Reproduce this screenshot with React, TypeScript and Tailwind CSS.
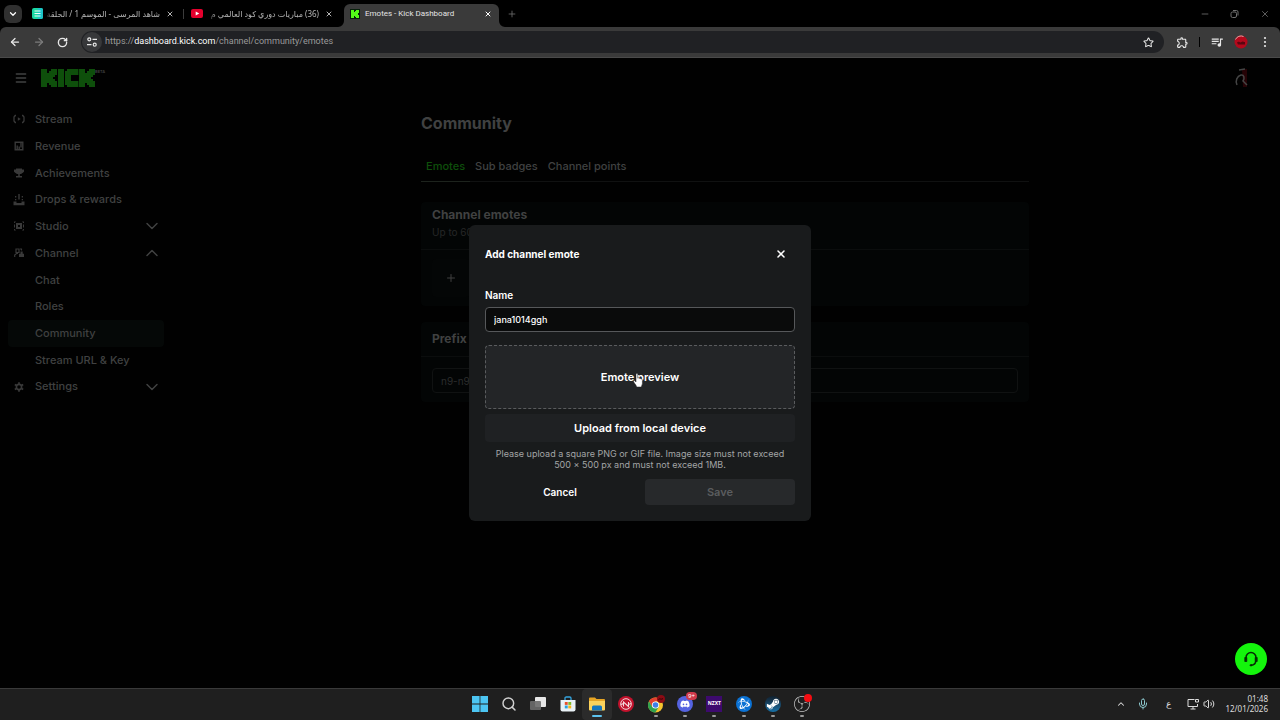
import type { ReactNode } from "react";
import {
  ArrowLeft,
  ArrowRight,
  ChevronDown,
  ChevronUp,
  Menu,
  Mic,
  Minus,
  Plus,
  RotateCw,
  Search,
  Star,
  Volume2,
  X,
} from "lucide-react";
import { FaDiscord, FaSteamSymbol } from "react-icons/fa";
import { SiBattledotnet, SiObsstudio } from "react-icons/si";
import { MdOutlineExtension, MdQueueMusic } from "react-icons/md";

type NavItem = {
  label: string;
  icon?: ReactNode;
  active?: boolean;
  toggle?: "open" | "closed";
};

const navItems: NavItem[] = [
  { label: "Stream", icon: <StreamIcon /> },
  { label: "Revenue", icon: <RevenueIcon /> },
  { label: "Achievements", icon: <TrophyIcon /> },
  { label: "Drops & rewards", icon: <DropsIcon /> },
  { label: "Studio", icon: <StudioIcon />, toggle: "closed" },
  { label: "Channel", icon: <ChannelIcon />, toggle: "open" },
  { label: "Chat" },
  { label: "Roles" },
  { label: "Community", active: true },
  { label: "Stream URL & Key" },
  { label: "Settings", icon: <GearIcon />, toggle: "closed" },
];

function StreamIcon() {
  return (
    <svg viewBox="0 0 12 12" className="size-3" fill="none" stroke="currentColor" strokeWidth="1.3">
      <path d="M3 2.5H2.2L1 4v4l1.2 1.5H3M9 2.5h.8L11 4v4L9.800 9.500H9" />
      <path d="M4.800 4.200v3.600L7.800 6z" fill="currentColor" stroke="none" />
    </svg>
  );
}

function RevenueIcon() {
  return (
    <svg viewBox="0 0 12 12" className="size-3" fill="none" stroke="currentColor" strokeWidth="1.4">
      <path d="M2.200 2.200h7.600v7.600H2.200z" />
      <path d="M4.200 5.500v4M6.200 6.500v3M8 2.500v5" />
    </svg>
  );
}

function TrophyIcon() {
  return (
    <svg viewBox="0 0 12 12" className="size-3" fill="currentColor">
      <path d="M3 1.500h6v1h2v2.200L9.500 6 8 7H6.800v2H9v1.500H3V9h2.200V7H4L2.500 6 1 4.700V2.500h2z" />
    </svg>
  );
}

function DropsIcon() {
  return (
    <svg viewBox="0 0 12 12" className="size-3" fill="currentColor">
      <path d="M5.300 0h1.400v5.500H5.300zM2 2h1.300v1.400H2zM8.700 2H10v1.400H8.700zM2 5h1.300v1.300H2zM8.700 5H10v1.300H8.700zM.5 7.500h3V9h5V7.500h3V11.300H.5z" />
    </svg>
  );
}

function StudioIcon() {
  return (
    <svg viewBox="0 0 12 12" className="size-3" fill="currentColor">
      <path d="M3 3h6v6H3zm2 2v2h2V5z" fillRule="evenodd" />
      <path d="M1 1.500h2L1.800 3H1zM9 1.500h2V3h-.8zM1 9h.8L3 10.500H1zM10.200 9h.8v1.500H9zM1 4.500h1v3H1zM10 4.500h1v3h-1z" />
    </svg>
  );
}

function ChannelIcon() {
  return (
    <svg viewBox="0 0 12 12" className="size-3" fill="none" stroke="currentColor" strokeWidth="1.200">
      <path d="M3 2h3v3.500H3zM1.700 10V8l1.800-1.500H5" />
      <path d="M7.500 4.500h2.200v2.300H11V10H6V6.800h1.500z" fill="currentColor" stroke="none" />
      <path d="M7 2h1.500v1.500" />
    </svg>
  );
}

function GearIcon() {
  return (
    <svg viewBox="0 0 12 12" className="size-3" fill="none" stroke="currentColor">
      <circle cx="6" cy="6" r="2.600" strokeWidth="1.600" />
      <path
        d="M6 1.200v1.800M6 9v1.800M1.800 3.600l1.600.9M8.600 7.500l1.600.9M1.800 8.400l1.600-.9M8.600 4.500l1.600-.9"
        strokeWidth="1.700"
      />
    </svg>
  );
}

function KickLogo() {
  return (
    <svg viewBox="0 0 27 9" className="h-[18px] w-[54px]" fill="#0e4f0b" aria-label="Kick">
      <path d="M0 0h3v2h1V1h1V0h3v3H7v1H6v1h1v1h1v3H5V8H4V7H3v2H0z" />
      <path d="M8.500 0h3v9h-3z" />
      <path d="M13 0h5.700v3H15v3h3.700v3H13V8h-1V1h1z" />
      <path d="M19 0h3v2h1V1h1V0h3v3h-1v1h-1v1h1v1h1v3h-3V8h-1V7h-1v2h-3z" />
    </svg>
  );
}

function BrowserTabs() {
  return (
    <div className="flex h-[27px] items-end bg-black text-[#b4b4b4]">
      <button
        type="button"
        aria-label="Search tabs"
        className="mb-1 ml-1 flex size-[18px] items-center justify-center rounded-md bg-[#303030] text-white"
      >
        <ChevronDown className="size-2.5" strokeWidth={3} />
      </button>

      <div className="flex h-[27px] w-[161px] items-center pl-[10px]">
        <svg viewBox="0 0 11 11" className="size-[11px] shrink-0">
          <rect width="11" height="11" rx="2" fill="#19d8a4" />
          <path d="M6 0h3a2 2 0 0 1 2 2v7a2 2 0 0 1-2 2H6z" fill="#1cc4c8" />
          <path d="M2.500 3h6M2.500 5.500h6M2.500 8h6" stroke="#eafff8" strokeWidth="1.200" />
        </svg>
        <span
          dir="rtl"
          className="ml-0.5 w-[115px] mask-[linear-gradient(to_right,transparent,black_8px)] text-[8px] leading-3 whitespace-nowrap"
        >
          شاهد المرسى - الموسم 1 / الحلقة
        </span>
        <button type="button" aria-label="Close tab" className="ml-1.5">
          <X className="size-2" strokeWidth={3} />
        </button>
      </div>

      <div className="flex h-[27px] w-[161px] items-center">
        <span className="h-2.5 w-px bg-[#3c3c3c]" />
        <svg viewBox="0 0 12 9" className="ml-[7px] h-[9px] w-3 shrink-0">
          <rect width="12" height="9" rx="2" fill="#e5002d" />
          <path d="M4.700 2.400v4.200L8.300 4.500z" fill="#fff" />
        </svg>
        <span
          dir="rtl"
          className="ml-[5px] w-[111px] mask-[linear-gradient(to_right,transparent,black_8px)] text-[8px] leading-3 whitespace-nowrap"
        >
          (36) مباريات دوري كود العالمي م
        </span>
        <button type="button" aria-label="Close tab" className="ml-1.5">
          <X className="size-2" strokeWidth={3} />
        </button>
      </div>

      <div className="relative flex h-[23px] w-[155px] items-center rounded-t-md bg-[#3a3a3a] pr-[7px] pb-[3px] pl-1.5 text-[#e4e4e4]">
        <svg viewBox="0 0 6 6" className="absolute bottom-0 -left-1.5 size-1.5">
          <path d="M6 0v6H0a6 6 0 0 0 6-6z" fill="#3a3a3a" />
        </svg>
        <svg viewBox="0 0 6 6" className="absolute -right-1.5 bottom-0 size-1.5">
          <path d="M0 0v6h6a6 6 0 0 1-6-6z" fill="#3a3a3a" />
        </svg>
        <svg viewBox="0 0 10 10" className="size-[10px] shrink-0">
          <rect width="10" height="10" fill="#06200a" />
          <path d="M1 1h3v2h1V2h1V1h3v3H8v1H7v0h1v1h1v3H6V8H5V7H4v2H1z" fill="#53fc18" />
        </svg>
        <span className="ml-[5px] flex-1 font-[Roboto,sans-serif] text-[8px] leading-3 whitespace-nowrap">
          Emotes - Kick Dashboard
        </span>
        <button type="button" aria-label="Close tab" className="text-white">
          <X className="size-2" strokeWidth={3} />
        </button>
      </div>

      <button type="button" aria-label="New tab" className="mb-2 ml-2 text-[#6d6d6d]">
        <Plus className="size-2.5" strokeWidth={2} />
      </button>

      <div className="mb-2 ml-auto flex items-center gap-5 pr-2.5 text-[#6f6f6f]">
        <button type="button" aria-label="Minimize">
          <Minus className="size-2.5" strokeWidth={2} />
        </button>
        <button type="button" aria-label="Restore">
          <svg viewBox="0 0 10 10" className="size-2.5" fill="none" stroke="currentColor">
            <rect x="1" y="3" width="5.500" height="5.500" rx="1.500" />
            <path d="M3 1.500h3.500a1.500 1.500 0 0 1 1.500 1.500v3.500" />
          </svg>
        </button>
        <button type="button" aria-label="Close window">
          <X className="size-2.5" strokeWidth={2} />
        </button>
      </div>
    </div>
  );
}

function BrowserToolbar() {
  return (
    <div className="bg-black">
      <div className="flex h-[31px] items-center rounded-t-md border-b border-[#4a4a4a] bg-[#3a3a3a] text-[#e8e8e8]">
        <div className="flex w-[81px] shrink-0 items-center gap-3 pl-[9px]">
          <button type="button" aria-label="Back">
            <ArrowLeft className="size-3" strokeWidth={2.5} />
          </button>
          <button type="button" aria-label="Forward" className="text-[#7c7c7c]">
            <ArrowRight className="size-3" strokeWidth={2.5} />
          </button>
          <button type="button" aria-label="Reload">
            <RotateCw className="size-[11px]" strokeWidth={3} />
          </button>
        </div>
        <div className="flex h-[22px] flex-1 items-center rounded-full bg-[#202124] pr-2.5 pl-px">
          <button
            type="button"
            aria-label="Site information"
            className="flex size-5 shrink-0 items-center justify-center rounded-full bg-[#37383a]"
          >
            <svg viewBox="0 0 12 12" className="size-3" fill="none" stroke="currentColor" strokeWidth="1.200">
              <circle cx="3.300" cy="3.300" r="1.500" />
              <circle cx="8.700" cy="8.700" r="1.500" />
              <path d="M6.500 3.300h4.500M1 8.700h4.500" />
            </svg>
          </button>
          <span className="ml-[3px] font-[Roboto,sans-serif] text-[9px] whitespace-nowrap text-[#9a9a9a]">
            https://<span className="text-white">dashboard.kick.com</span>/channel/community/emotes
          </span>
          <button type="button" aria-label="Bookmark" className="ml-auto">
            <Star className="size-[11px]" strokeWidth={2.200} />
          </button>
        </div>
        <div className="flex shrink-0 items-center gap-2.5 pr-2.5 pl-3">
          <button type="button" aria-label="Extensions">
            <MdOutlineExtension className="size-[13px]" />
          </button>
          <span className="h-2.5 w-px bg-black" />
          <button type="button" aria-label="Media">
            <MdQueueMusic className="size-[14px]" />
          </button>
          <button type="button" aria-label="Profile">
            <svg viewBox="0 0 14 14" className="size-[14px]">
              <circle cx="7" cy="7" r="6.500" fill="#b3091c" />
              <path d="M1.500 4.500a6 6 0 0 1 8-3" stroke="#e7a4a4" fill="none" />
              <path d="M3 7.500c2-2 3 1 4.500-.5s2 .5 3.500 0v2.500H4z" fill="#5a0610" />
            </svg>
          </button>
          <button type="button" aria-label="Browser menu" className="pl-0.5">
            <svg viewBox="0 0 10 12" className="h-3 w-2.5" fill="currentColor">
              <circle cx="5" cy="2" r="1.100" />
              <circle cx="5" cy="6" r="1.100" />
              <circle cx="5" cy="10" r="1.100" />
            </svg>
          </button>
        </div>
      </div>
    </div>
  );
}

function Sidebar() {
  return (
    <nav className="w-[170px] shrink-0 pt-2 pr-1.5 pl-2">
      <ul className="flex h-[294px] flex-col">
        {navItems.map((item) => (
          <li key={item.label} className="flex-1">
            <a
              href="#"
              className={`flex h-full items-center rounded pr-0.5 pl-[5px] text-[11px] font-medium ${
                item.active ? "bg-[#050807]" : ""
              }`}
            >
              <span className="w-[22px] shrink-0 text-[#393939]">{item.icon}</span>
              <span className="flex-1">{item.label}</span>
              {item.toggle === "closed" && <ChevronDown className="size-5" strokeWidth={1.800} />}
              {item.toggle === "open" && <ChevronUp className="size-5" strokeWidth={1.800} />}
            </a>
          </li>
        ))}
      </ul>
    </nav>
  );
}

function CommunityPage() {
  return (
    <main className="min-w-0 flex-1 pt-[13px]">
      <div className="mx-auto max-w-[608px]">
        <h1 className="text-base leading-6 font-bold">Community</h1>

        <div className="mt-[23px] flex border-b border-[#101111] text-[11px] leading-4 font-medium">
          <a href="#" className="-mb-px border-b border-[#1d231d] px-[5px] pb-[7px] text-[#0e4f0b]">
            Emotes
          </a>
          <a href="#" className="px-[5px] pb-[7px]">
            Sub badges
          </a>
          <a href="#" className="px-[5px] pb-[7px]">
            Channel points
          </a>
        </div>

        <section className="mt-5 rounded bg-[#030505]">
          <div className="border-b border-[#0b0d0d] px-[11px] pt-1 pb-[9px]">
            <h2 className="text-xs leading-[18px] font-bold">Channel emotes</h2>
            <p className="text-[10px] leading-4 text-[#262727]">Up to 60 emotes</p>
          </div>
          <div className="px-[11px] py-[9px]">
            <button
              type="button"
              aria-label="Add emote"
              className="flex size-[38px] items-center justify-center rounded bg-[#040606]"
            >
              <Plus className="size-3" strokeWidth={2} />
            </button>
          </div>
        </section>

        <section className="mt-4 rounded bg-[#030505]">
          <div className="border-b border-[#0b0d0d] px-[11px] py-2">
            <h2 className="text-xs leading-[18px] font-bold">
              <label htmlFor="prefix">Prefix</label>
            </h2>
          </div>
          <div className="px-[11px] pt-[11px] pb-[9px]">
            <input
              id="prefix"
              defaultValue="n9-n9"
              className="block h-[25px] w-full rounded-sm border border-[#101212] bg-transparent px-2 text-[10px] text-[#2c2d2d] outline-none"
            />
          </div>
        </section>
      </div>
    </main>
  );
}

function HandCursor() {
  return (
    <svg viewBox="0 0 10 15" className="absolute top-[27px] left-[147px] h-[15px] w-2.5">
      <path
        d="M3 1.500c0-1.300 1.800-1.300 1.800 0v3.700c.5-.6 1.400-.4 1.600.3.500-.4 1.300-.1 1.500.5.700-.2 1.500.2 1.500 1.100v3.300c0 1.400-1 2-1 3.600H3.600c0-1.500-1.500-2.600-2.900-5-.6-1.100.5-1.900 1.300-1.100l1 1z"
        fill="#fff"
        stroke="#222"
        strokeWidth=".5"
      />
    </svg>
  );
}

function AddEmoteDialog() {
  return (
    <div className="absolute inset-0 flex items-center justify-center">
      <div
        role="dialog"
        aria-labelledby="dialog-title"
        className="w-[342px] rounded-md bg-[#191b1c] px-4 pt-5 pb-4 text-white"
      >
        <div className="flex h-[18px] items-center justify-between">
          <h2 id="dialog-title" className="text-[10px] font-bold">
            Add channel emote
          </h2>
          <button type="button" aria-label="Close" className="pr-2">
            <X className="size-3" strokeWidth={3} />
          </button>
        </div>

        <label htmlFor="emote-name" className="mt-6 block text-[10px] leading-4 font-semibold">
          Name
        </label>
        <input
          id="emote-name"
          defaultValue="jana1014ggh"
          className="mt-1 block h-[25px] w-full rounded-sm border border-[#56585a] bg-[#0a0b0b] px-2 text-[9px] font-medium outline-none"
        />

        <div className="relative mt-[13px] flex h-16 items-center justify-center rounded-sm border border-dashed border-[#5a5c5e] bg-[#232527] text-[11px] font-semibold">
          Emote preview
          <HandCursor />
        </div>

        <button
          type="button"
          className="mt-[5px] block h-7 w-full rounded-sm bg-[#1f2123] text-[11px] font-semibold"
        >
          Upload from local device
        </button>
        <p className="mt-1.5 px-2 text-center text-[9px] leading-[11px] text-[#a3a5a6]">
          Please upload a square PNG or GIF file. Image size must not exceed 500 × 500 px and must
          not exceed 1MB.
        </p>

        <div className="mt-[9px] grid h-[26px] grid-cols-2 gap-2.5">
          <button type="button" className="text-[10px] font-semibold">
            Cancel
          </button>
          <button
            type="button"
            disabled
            className="rounded-sm bg-[#27292b] text-[11px] font-semibold text-[#5b5d5f]"
          >
            Save
          </button>
        </div>
      </div>
    </div>
  );
}

const taskbarApps: { name: string; icon: ReactNode; running?: boolean; focused?: boolean }[] = [
  {
    name: "Start",
    icon: (
      <svg viewBox="0 0 16 16" className="size-4" fill="#4cc5f2">
        <path d="M0 0h7.600v7.600H0zM8.400 0H16v7.600H8.400zM0 8.400h7.600V16H0zM8.400 8.400H16V16H8.400z" />
      </svg>
    ),
  },
  { name: "Search", icon: <Search className="size-4 text-[#d0d0d0]" strokeWidth={2.200} /> },
  {
    name: "Task view",
    icon: (
      <svg viewBox="0 0 16 16" className="size-4">
        <rect x="5" y="1" width="11" height="10" rx="1" fill="#e6e6e6" />
        <rect x="0" y="5" width="11" height="9" rx="1" fill="#6b6b6b" fillOpacity=".9" />
      </svg>
    ),
  },
  {
    name: "Microsoft Store",
    icon: (
      <svg viewBox="0 0 16 16" className="size-4">
        <path d="M5 4V2.200C5 1.300 5.600 1 6.300 1h3.400c.7 0 1.300.3 1.300 1.200V4" fill="none" stroke="#35a5e0" strokeWidth="1.300" />
        <path d="M.5 4h15v9.500a2 2 0 0 1-2 2h-11a2 2 0 0 1-2-2z" fill="#e9f1f6" />
        <path d="M4.800 6h2.900v2.900H4.800z" fill="#e8502c" />
        <path d="M8.300 6h2.900v2.900H8.300z" fill="#7fb92a" />
        <path d="M4.800 9.500h2.900v2.900H4.800z" fill="#2aa2e0" />
        <path d="M8.300 9.500h2.900v2.900H8.300z" fill="#f6b61a" />
      </svg>
    ),
  },
  {
    name: "File Explorer",
    focused: true,
    icon: (
      <svg viewBox="0 0 16 16" className="size-4">
        <path d="M0 2.500a1 1 0 0 1 1-1h5L7.500 3H15a1 1 0 0 1 1 1v4H0z" fill="#e7a525" />
        <path d="M0 5h16v8.500a1 1 0 0 1-1 1H1a1 1 0 0 1-1-1z" fill="#fbd25c" />
        <path d="M3 14.500V11a1.500 1.500 0 0 1 1.500-1.500h7A1.500 1.500 0 0 1 13 11v3.500z" fill="#1676bd" />
      </svg>
    ),
  },
  {
    name: "Launcher",
    icon: (
      <svg viewBox="0 0 16 16" className="size-4">
        <circle cx="8" cy="8" r="8" fill="#c2122c" />
        <circle cx="8" cy="8" r="5.300" fill="none" stroke="#f3d8dc" strokeWidth="1" />
        <path d="M5.500 10.500V6l5 4.500V6M3 8.500l2.500-1M10.500 8.500l2.500-1" fill="none" stroke="#f3d8dc" strokeWidth="1.100" />
      </svg>
    ),
  },
  {
    name: "Chrome",
    running: true,
    icon: (
      <svg viewBox="0 0 18 18" className="size-[18px]">
        <circle cx="8.500" cy="10" r="7.500" fill="#f7c52e" />
        <path d="M2 6.200A7.500 7.500 0 0 1 15 6.200H8.500L5.200 12z" fill="#e2402f" />
        <path d="M2 6.200A7.500 7.500 0 0 0 8.300 17.500L11.700 12H5.200z" fill="#2fa24f" />
        <circle cx="8.500" cy="10" r="3.600" fill="#fff" />
        <circle cx="8.500" cy="10" r="2.800" fill="#3f7fe8" />
        <circle cx="14" cy="4" r="4" fill="#8b0b14" />
        <path d="M11.500 4.500c1.500-1.500 2 .5 4.500-.8" stroke="#2f0306" fill="none" />
      </svg>
    ),
  },
  {
    name: "Discord",
    running: true,
    icon: (
      <span className="relative flex size-4 items-center justify-center rounded-full bg-[#5563e0] text-white">
        <FaDiscord className="size-2.5" />
        <span className="absolute -top-1 -right-1 rounded-full bg-[#cf3a4b] px-0.5 text-[6px] leading-2">
          9+
        </span>
      </span>
    ),
  },
  {
    name: "NZXT",
    running: true,
    icon: (
      <span className="flex size-4 items-center justify-center bg-[#3d0a6e] text-[5px] font-bold text-white">
        NZXT
      </span>
    ),
  },
  {
    name: "Battle.net",
    running: true,
    icon: (
      <span className="flex size-4 items-center justify-center rounded-full bg-[#0b72d4] text-white">
        <SiBattledotnet className="size-3" />
      </span>
    ),
  },
  {
    name: "Steam",
    running: true,
    icon: (
      <span className="flex size-4 items-center justify-center rounded-full bg-linear-to-b from-[#10202e] to-[#1672a8] text-white">
        <FaSteamSymbol className="size-3.5" />
      </span>
    ),
  },
  {
    name: "OBS Studio",
    running: true,
    icon: (
      <span className="relative flex size-4 text-[#c4c4c4]">
        <SiObsstudio className="size-4" />
        <span className="absolute -top-0.5 -right-0.5 size-2 rounded-full bg-[#f40d12]" />
      </span>
    ),
  },
];

function Taskbar() {
  return (
    <footer className="grid h-8 shrink-0 grid-cols-[1fr_354px_1fr] border-t border-[#3a3a3a] bg-[#1f1f1f]">
      <span />
      <div className="grid grid-cols-12 pl-0.5">
        {taskbarApps.map((app) => (
          <button
            key={app.name}
            type="button"
            aria-label={app.name}
            className={`relative flex items-center justify-center pb-0.5 ${
              app.focused ? "rounded-sm bg-[#2b2b2b]" : ""
            }`}
          >
            {app.icon}
            {app.running && (
              <span className="absolute bottom-[3px] h-0.5 w-1 rounded-full bg-[#9a9a9a]" />
            )}
            {app.focused && (
              <span className="absolute bottom-[3px] h-0.5 w-2.5 rounded-full bg-[#5cc3ee]" />
            )}
          </button>
        ))}
      </div>
      <div className="flex items-center justify-end pr-3 pb-0.5 text-[#dcdcdc]">
        <ChevronUp className="size-2.5" strokeWidth={2.500} />
        <Mic className="ml-[11px] size-3 text-[#8cc7cd]" strokeWidth={2} />
        <span className="ml-[17px] text-[9px]">ع</span>
        <svg viewBox="0 0 12 12" className="ml-4 size-3" fill="none" stroke="currentColor">
          <path d="M7.500 1.500H1v7h9.500V6M3.500 11h5M6 8.500V11" />
          <path d="M8.500 1.500h3v2.500h-3z" />
        </svg>
        <Volume2 className="ml-1 size-3" strokeWidth={2} />
        <div className="ml-2.5 text-right text-[8px] leading-[10px]">
          <p>01:48</p>
          <p>12/01/2026</p>
        </div>
      </div>
    </footer>
  );
}

export default function App() {
  return (
    <div className="flex h-screen flex-col overflow-hidden bg-black font-['Noto_Sans','DejaVu_Sans',sans-serif]">
      <BrowserTabs />
      <BrowserToolbar />

      <div className="relative min-h-0 flex-1 bg-[#010101] font-[Inter,sans-serif] text-[#404141]">
        <header className="flex h-10 items-center pr-8 pl-[14px]">
          <button type="button" aria-label="Menu">
            <Menu className="size-3.5" strokeWidth={2.500} />
          </button>
          <a href="#" className="ml-[13px] flex items-start">
            <KickLogo />
            <span className="text-[4px] leading-[5px] font-semibold">BETA</span>
          </a>
          <button type="button" aria-label="Account" className="ml-auto">
            <svg viewBox="0 0 14 20" className="h-5 w-3.5" fill="none">
              <path d="M8 1h5v18H9z" fill="#260306" />
              <path d="M3 17c-2-4 0-9 4-10 3-.5 4 3 2 6l4 4M5 2l6-1" stroke="#454545" strokeWidth="1.500" />
            </svg>
          </button>
        </header>
        <div className="flex">
          <Sidebar />
          <CommunityPage />
        </div>

        <AddEmoteDialog />

        <button
          type="button"
          aria-label="Support"
          className="absolute right-[13px] bottom-[13px] flex size-8 items-center justify-center rounded-full bg-[#14f50c]"
        >
          <svg viewBox="0 0 16 16" className="size-4" fill="none" stroke="#052b04" strokeWidth="1.500">
            <path d="M3 9V6.500a5 5 0 0 1 10 0V9M12.800 9.500c0 3-1.500 4.500-4.800 4.800" />
            <path d="M1.800 6.500h2v4h-2zM12.200 6.500h2v4h-2zM7 13.800h2v1H7z" fill="#052b04" strokeWidth=".8" />
          </svg>
        </button>
      </div>

      <Taskbar />
    </div>
  );
}
